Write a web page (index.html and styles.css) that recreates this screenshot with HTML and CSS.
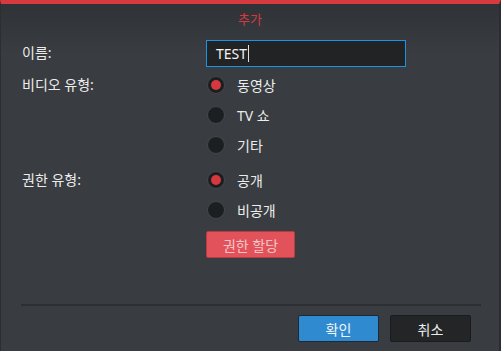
FILE: index.html
```html
<html>
<head>
<title>추가</title>
<link rel="stylesheet" href="styles.css">
</head>
<body>

<div class="dialog">
  <div class="dialog-title">추가</div>

  <div class="form">
    <div class="form-row">
      <div class="form-label label-name">이름:</div>
      <div class="form-field"><div class="text-input">TEST<span class="caret"></span></div></div>
    </div>

    <div class="form-row group-video">
      <div class="form-label">비디오 유형:</div>
      <div class="form-field">
        <div class="radio-item"><span class="radio checked"></span>동영상</div>
        <div class="radio-item"><span class="radio"></span>TV 쇼</div>
        <div class="radio-item"><span class="radio"></span>기타</div>
      </div>
    </div>

    <div class="form-row group-perm">
      <div class="form-label">권한 유형:</div>
      <div class="form-field">
        <div class="radio-item"><span class="radio checked"></span>공개</div>
        <div class="radio-item"><span class="radio"></span>비공개</div>
        <button class="btn btn-red">권한 할당</button>
      </div>
    </div>
  </div>

  <div class="dialog-footer">
    <button class="btn btn-blue">확인</button>
    <button class="btn btn-dark">취소</button>
  </div>
</div>

</body>
</html>
```

FILE: styles.css
```css
body {
  margin:0;
  background:#393c40;
  font-family:"Noto Sans", "Noto Sans CJK KR", sans-serif;
  font-size:14px;
  color:#ececec;
}

.dialog {
  width:498px;
  height:347px;
  border-top:4px solid #d63a3f;
  border-left:1px solid #2c2e31;
  border-right:2px solid #2a2c2f;
  background:linear-gradient(#2f3236 0, #393c40 50px, #393c40 100%);
  display:flex;
  flex-direction:column;
}

.dialog-title {
  height:36px;
  line-height:31px;
  text-align:center;
  color:#d5393e;
  font-size:13px;
}

.form {
  padding-left:21px;
  flex:1;
}

.form-row {
  display:grid;
  grid-template-columns:184px 200px;
}

.form-label {
  line-height:30px;
}

.label-name {
  line-height:26px;
}

.text-input {
  height:25px;
  border:1px solid #1a94e6;
  background:#222325;
  color:#f4f4f4;
  font-size:14px;
  line-height:25px;
  padding-left:9px;
  display:flex;
  align-items:center;
}

.caret {
  display:inline-block;
  width:1px;
  height:17px;
  background:#e0e0e0;
  margin-left:1px;
}

.group-video {
  margin-top:3px;
}

.group-perm {
  margin-top:5px;
}

.radio-item {
  height:30px;
  display:flex;
  align-items:center;
}

.radio {
  width:16px;
  height:16px;
  border-radius:50%;
  background:#1c1f22;
  border:1px solid #44474b;
  margin-left:1px;
  margin-right:12px;
  display:flex;
  align-items:center;
  justify-content:center;
}

.radio.checked::after {
  content:"";
  width:10px;
  height:10px;
  border-radius:50%;
  background:#d6383d;
}

.btn {
  font-family:"Noto Sans", "Noto Sans CJK KR", sans-serif;
  font-size:14px;
  height:27px;
  border-radius:2px;
  padding:0;
}

.btn-red {
  margin-top:6px;
  width:89px;
  background:#e2525a;
  border:1px solid #b63c43;
  color:#f6c4c6;
}

.dialog-footer {
  margin:0 18px 9px 20px;
  border-top:2px solid #2c2e31;
  padding-top:9px;
  display:flex;
  justify-content:flex-end;
  gap:11px;
}

.btn-blue {
  width:81px;
  background:#2f8ad0;
  border:1px solid #1c2a36;
  color:#f2f6fa;
}

.btn-dark {
  width:81px;
  margin-right:10px;
  background:#232527;
  border:1px solid #1a1b1d;
  color:#ececec;
}
```
